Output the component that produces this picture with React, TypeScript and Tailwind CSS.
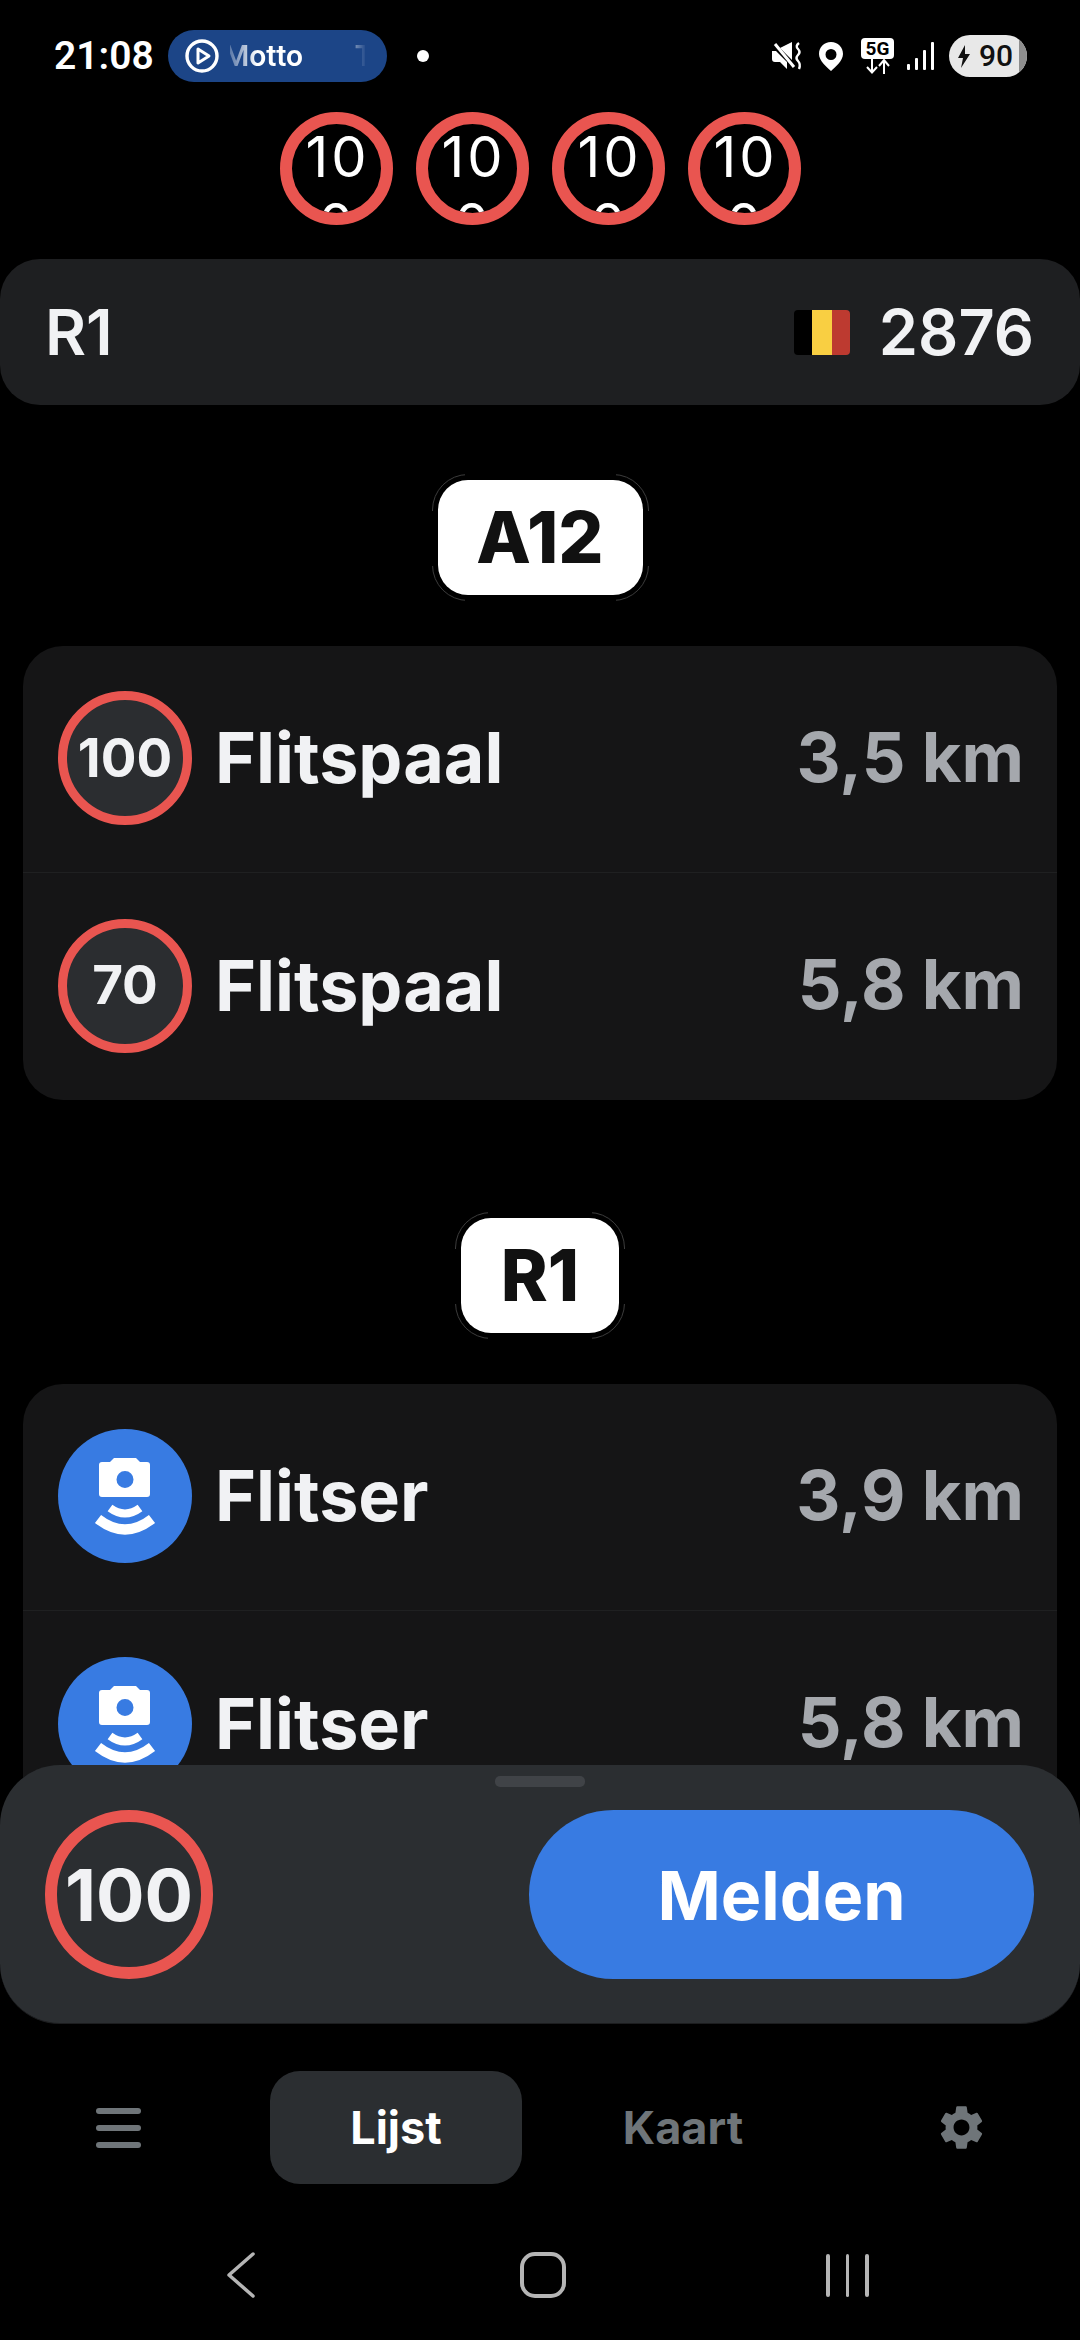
import React from "react";
import { MdSettings } from "react-icons/md";

const RED_RING = "border-[#e95550]";

const TopSign = () => (
  <div className={`w-[113px] h-[113px] rounded-full border-[12px] ${RED_RING} overflow-hidden`}>
    <div className="pl-[3px] text-[56px] leading-[67px] font-normal tracking-[3px] text-white text-center break-all">100</div>
  </div>
);

const MuteIcon = () => (
  <svg width="31" height="28" viewBox="0 0 31 28">
    <path d="M0 9 H4 L15 20 V27 L8 20 H3 Q0 20 0 17 Z" fill="white" />
    <path d="M8 6 L20 0 V18 Z" fill="white" />
    <path d="M3 2 L22 25" fill="none" stroke="white" strokeWidth="3" />
    <path d="M27 1 Q23 4 26 7 Q29 10 26 13 Q23 16 26 19 Q29 22 27 27" fill="none" stroke="white" strokeWidth="2.4" />
  </svg>
);

const PinIcon = () => (
  <svg width="24" height="29" viewBox="0 0 24 29" className="ml-[16px]">
    <path
      fillRule="evenodd"
      d="M12 0 C5 0 0 5 0 12 C0 19 8 25 12 29 C16 25 24 19 24 12 C24 5 19 0 12 0 Z M12 7 A5.5 5.5 0 1 1 12 18 A5.5 5.5 0 1 1 12 7 Z"
      fill="white"
    />
  </svg>
);

const FiveGIcon = () => (
  <div className="ml-[18px] w-[33px] flex flex-col items-center">
    <div className="w-[33px] h-[21px] bg-white rounded-[4px] text-black text-[19px] leading-[21px] font-bold text-center font-['Roboto',sans-serif]">
      5G
    </div>
    <svg width="26" height="15" viewBox="0 0 26 15">
      <path d="M7 0 V13 M2 8 L7 13.5 L12 8" fill="none" stroke="white" strokeWidth="2" />
      <path d="M19 15 V1 M14 7 L19 1 L24 7" fill="none" stroke="white" strokeWidth="2" />
    </svg>
  </div>
);

const SignalIcon = () => (
  <div className="ml-[13px] flex items-end gap-[5px] h-[28px]">
    <div className="w-[3px] h-[6px] bg-white rounded-[1px]" />
    <div className="w-[3px] h-[12px] bg-white rounded-[1px]" />
    <div className="w-[3px] h-[20px] bg-white rounded-[1px]" />
    <div className="w-[3px] h-[28px] bg-white rounded-[1px]" />
  </div>
);

const Battery = () => (
  <div className="ml-[15px] w-[78px] h-[42px] rounded-[21px] bg-[#e8e8e8] overflow-hidden flex items-center relative">
    <svg width="12" height="23" viewBox="0 0 12 23" className="ml-[9px]">
      <path d="M7 0 L0 13 H5 L3 23 L12 9 H7 Z" fill="#111" />
    </svg>
    <span className="ml-[9px] text-[30px] leading-none font-medium text-[#111] font-['Roboto',sans-serif]">90</span>
    <div className="absolute right-0 top-0 bottom-0 w-[8px] bg-[#8d8d8d]" />
  </div>
);

const StatusBar = () => (
  <div className="h-[112px] pl-[54px] pr-[53px] flex items-center justify-between font-['Roboto',sans-serif]">
    <div className="flex items-center">
      <span className="w-[102px] text-[39px] leading-none font-semibold text-white whitespace-nowrap">21:08</span>
      <div className="ml-[12px] w-[219px] h-[52px] rounded-[26px] bg-[#1c4587] flex items-center">
        <svg width="34" height="34" viewBox="0 0 34 34" className="ml-[17px]">
          <circle cx="17" cy="17" r="15" fill="none" stroke="white" strokeWidth="3.4" />
          <path d="M13 10 L24 17 L13 24 Z" fill="none" stroke="white" strokeWidth="3" strokeLinejoin="round" />
        </svg>
        <div className="ml-[11px] w-[78px] overflow-hidden">
          <div className="-ml-[7px] text-[30px] leading-[52px] font-semibold whitespace-nowrap bg-gradient-to-r from-white/10 via-white via-40% to-white bg-clip-text text-transparent">
            Motto
          </div>
        </div>
        <div className="ml-[47px] w-[10px] overflow-hidden text-[30px] leading-[52px] font-semibold bg-gradient-to-r from-white/40 to-white/5 bg-clip-text text-transparent">
          T
        </div>
      </div>
      <div className="ml-[30px] w-[12px] h-[12px] rounded-full bg-white" />
    </div>
    <div className="flex items-center">
      <MuteIcon />
      <PinIcon />
      <FiveGIcon />
      <SignalIcon />
      <Battery />
    </div>
  </div>
);

// white road shield, the faint outer ring only shows at the corners
const RoadBadge = ({ label, width }: { label: string; width: string }) => (
  <div className={`relative mx-auto ${width} h-[127px] rounded-[36px] border border-[#3c3c3c] p-[5px]`}>
    <div className="absolute left-[32px] right-[32px] -top-[1px] -bottom-[1px] bg-black" />
    <div className="absolute top-[36px] bottom-[34px] -left-[1px] -right-[1px] bg-black" />
    <div className="relative h-full rounded-[30px] bg-white flex items-center justify-center text-[71px] leading-none font-extrabold text-[#111]">
      {label}
    </div>
  </div>
);

const SpeedSign = ({ value }: { value: string }) => (
  <div className={`w-[134px] h-[134px] shrink-0 rounded-full border-[9px] ${RED_RING} bg-[#2b2d30] flex items-center justify-center text-[53px] leading-none font-bold text-[#f1f2f4]`}>
    {value}
  </div>
);

const CameraSign = () => (
  <div className="w-[134px] h-[134px] shrink-0 rounded-full bg-[#387be2]">
    <svg width="134" height="134" viewBox="0 0 134 134">
      <path
        fillRule="evenodd"
        d="M44 33 H52 L56 29 Q57 29 59 29 H75 Q77 29 78 29 L82 33 H89 Q92 33 92 36 V65 Q92 68 89 68 H44 Q41 68 41 65 V36 Q41 33 44 33 Z M67 42 A8.5 8.5 0 1 1 67 59 A8.5 8.5 0 1 1 67 42 Z"
        fill="white"
      />
      <path d="M52 79 Q67 90 82 79" fill="none" stroke="white" strokeWidth="8" />
      <path d="M40 90 Q67 111 94 90" fill="none" stroke="white" strokeWidth="10" />
    </svg>
  </div>
);

const AlertRow = ({ icon, title, distance }: { icon: React.ReactNode; title: string; distance: string }) => (
  <div className="h-[227px] pl-[35px] pr-[33px] pb-[2px] flex items-center">
    {icon}
    <span className="ml-[23px] text-[70px] leading-none font-bold text-[#f1f2f4]">{title}</span>
    <span className="ml-auto text-[68.5px] leading-none font-bold text-[#a5a8ad]">{distance}</span>
  </div>
);

const AlertCard = ({ children }: { children: React.ReactNode }) => (
  <div className="mx-[23px] rounded-[40px] bg-[#151516] divide-y divide-[#1f2021]">{children}</div>
);

const BottomSheet = () => (
  <div className="relative z-10 -mt-[60px] h-[259px] rounded-[60px] bg-[#2b2e31] border-b border-[#1c1d1f]">
    <div className="w-[90px] h-[11px] rounded-[5px] bg-[#404347] mx-auto relative top-[11px]" />
    <div className="mt-[34px] pl-[45px] pr-[46px] flex items-center justify-between">
      <div className={`w-[168px] h-[169px] rounded-full border-[12px] ${RED_RING} flex items-center justify-center text-[72px] leading-none font-bold text-[#f1f2f4]`}>
        100
      </div>
      <button className="w-[505px] h-[169px] rounded-full bg-[#387be2] text-white text-[68px] leading-none font-bold">
        Melden
      </button>
    </div>
  </div>
);

const TabBar = () => (
  <div className="mt-[47px] h-[113px] flex items-center text-[45px] leading-none font-bold">
    <div className="ml-[96px] w-[45px] flex flex-col gap-[11px]">
      <div className="h-[6px] rounded-full bg-[#6f7579]" />
      <div className="h-[6px] rounded-full bg-[#6f7579]" />
      <div className="h-[6px] rounded-full bg-[#6f7579]" />
    </div>
    <div className="ml-[129px] w-[252px] h-[113px] rounded-[30px] bg-[#2b2e31] flex items-center justify-center text-white">
      Lijst
    </div>
    <div className="ml-[35px] w-[252px] flex items-center justify-center text-[#6f7579]">Kaart</div>
    <MdSettings size={53} className="ml-[126px] text-[#6f7579]" />
  </div>
);

const SystemNav = () => (
  <div className="mt-[68px] h-[46px] flex items-center">
    <svg width="30" height="46" viewBox="0 0 30 46" className="ml-[226px]">
      <path d="M27 2 L3 23 L27 44" fill="none" stroke="#b5b5b5" strokeWidth="3.5" strokeLinecap="round" strokeLinejoin="round" />
    </svg>
    <div className="ml-[264px] w-[46px] h-[46px] rounded-[15px] border-[4px] border-[#b5b5b5]" />
    <div className="ml-[260px] flex gap-[16px]">
      <div className="w-[3.5px] h-[43px] rounded-full bg-[#b5b5b5]" />
      <div className="w-[3.5px] h-[43px] rounded-full bg-[#b5b5b5]" />
      <div className="w-[3.5px] h-[43px] rounded-full bg-[#b5b5b5]" />
    </div>
  </div>
);

export default function App() {
  return (
    <div className="w-[1080px] h-[2340px] overflow-hidden bg-black font-['Inter',sans-serif]">
      <StatusBar />

      <div className="flex justify-center gap-[23px]">
        <TopSign />
        <TopSign />
        <TopSign />
        <TopSign />
      </div>

      <div className="mt-[34px] h-[146px] rounded-[40px] bg-[#1e1f21] pl-[45px] pr-[46px] flex items-center justify-between text-[63px] leading-none font-semibold text-[#f1f2f4]">
        <span>R1</span>
        <div className="flex items-center">
          <div className="w-[56px] h-[45px] rounded-[4px] overflow-hidden flex">
            <div className="w-[18px] bg-black" />
            <div className="w-[20px] bg-[#f9cf42]" />
            <div className="w-[18px] bg-[#bd3a30]" />
          </div>
          <span className="ml-[29px]">2876</span>
        </div>
      </div>

      <div className="h-[1420px] overflow-hidden">
        <div className="pt-[69px]">
          <RoadBadge label="A12" width="w-[217px]" />
        </div>
        <div className="mt-[45px]">
          <AlertCard>
            <AlertRow icon={<SpeedSign value="100" />} title="Flitspaal" distance="3,5 km" />
            <AlertRow icon={<SpeedSign value="70" />} title="Flitspaal" distance="5,8 km" />
          </AlertCard>
        </div>

        <div className="mt-[112px]">
          <RoadBadge label="R1" width="w-[170px]" />
        </div>
        <div className="mt-[45px]">
          <AlertCard>
            <AlertRow icon={<CameraSign />} title="Flitser" distance="3,9 km" />
            <AlertRow icon={<CameraSign />} title="Flitser" distance="5,8 km" />
          </AlertCard>
        </div>
      </div>

      <BottomSheet />
      <TabBar />
      <SystemNav />
    </div>
  );
}
